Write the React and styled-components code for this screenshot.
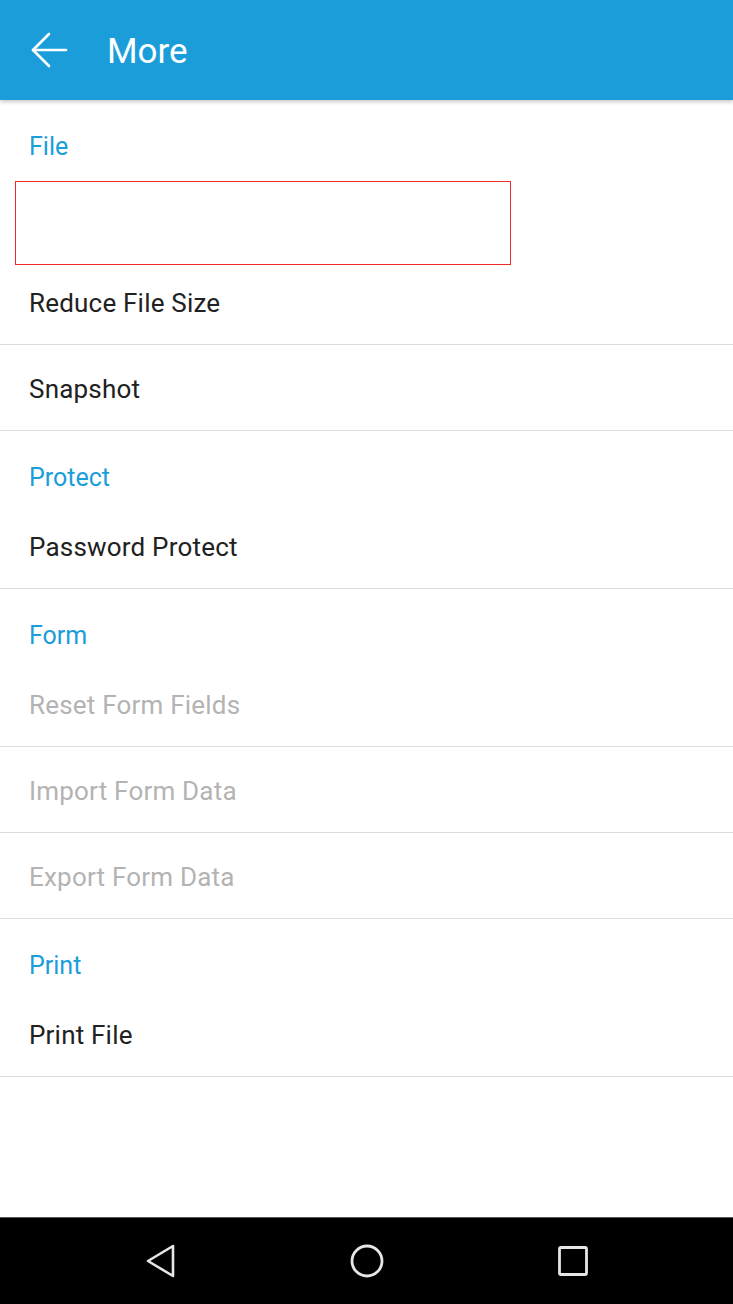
import React from 'react'
import styled, { createGlobalStyle } from 'styled-components'

const GlobalStyle = createGlobalStyle`
  html, body {
    margin: 0;
    padding: 0;
    background: #ffffff;
    font-family: Roboto, "Noto Sans", "Liberation Sans", sans-serif;
  }
`;

const Screen = styled.div`
  width: 733px;
  height: 1304px;
  display: flex;
  flex-direction: column;
  background: #ffffff;
  overflow: hidden;
`;

const AppBar = styled.header`
  height: 100px;
  flex: none;
  display: flex;
  align-items: center;
  background: #1a9dd9;
  box-shadow: 0 2px 4px rgba(0, 0, 0, 0.22);
  position: relative;
  z-index: 1;
`;

const BackButton = styled.button`
  width: 98px;
  height: 100px;
  padding: 0 0 0 30px;
  border: 0;
  background: none;
  display: flex;
  align-items: center;
  cursor: pointer;
`;

const Title = styled.h1`
  margin: 2px 0 0 9px;
  font-size: 35px;
  font-weight: 400;
  color: #ffffff;
`;

const Menu = styled.main`
  flex: 1;
  display: flex;
  flex-direction: column;
`;

const SectionLabel = styled.div`
  height: 72px;
  box-sizing: border-box;
  padding: 31px 29px 0;
  font-size: 25px;
  line-height: 32px;
  color: #1a9dd9;
`;

const Item = styled.div`
  height: 86px;
  box-sizing: border-box;
  padding: 2px 29px 0;
  display: flex;
  align-items: center;
  font-size: 26px;
  letter-spacing: 0.2px;
  color: ${props => (props.disabled ? '#b3b3b3' : '#212121')};
  border-bottom: ${props => (props.divider ? '1px solid #dcdcdc' : 'none')};
`;

const Slot = styled.div`
  height: 87px;
  padding: 9px 0 0 15px;
  box-sizing: border-box;
`;

const Highlight = styled.div`
  width: 496px;
  height: 84px;
  box-sizing: border-box;
  border: 1px solid #ee2a2a;
`;

const NavBar = styled.nav`
  height: 86px;
  flex: none;
  background: #000000;
  border-top: 1px solid #5a5a5a;
  display: flex;
  align-items: center;
  justify-content: center;
  gap: 146px;
`;

const NavKey = styled.div`
  width: 60px;
  height: 60px;
  display: flex;
  align-items: center;
  justify-content: center;
`;

const sections = [
  { label: 'Print', items: [{ text: 'Print File' }] },
];

export default function App() {
  return (
    <Screen>
      <GlobalStyle />
      <AppBar>
        <BackButton aria-label="Back">
          <svg width="38" height="38" viewBox="0 0 38 38" fill="none" stroke="#ffffff" strokeWidth="2.6" strokeLinecap="round" strokeLinejoin="round">
            <path d="M36 19H3" />
            <path d="M19 3L3 19l16 16" />
          </svg>
        </BackButton>
        <Title>More</Title>
      </AppBar>

      <Menu>
        <SectionLabel>File</SectionLabel>
        <Slot>
          <Highlight />
        </Slot>
        <Item divider>Reduce File Size</Item>
        <Item divider>Snapshot</Item>

        <SectionLabel>Protect</SectionLabel>
        <Item divider>Password Protect</Item>

        <SectionLabel>Form</SectionLabel>
        <Item divider disabled>Reset Form Fields</Item>
        <Item divider disabled>Import Form Data</Item>
        <Item divider disabled>Export Form Data</Item>

        {sections.map(section => (
          <React.Fragment key={section.label}>
            <SectionLabel>{section.label}</SectionLabel>
            {section.items.map(item => (
              <Item key={item.text} divider>{item.text}</Item>
            ))}
          </React.Fragment>
        ))}
      </Menu>

      <NavBar>
        <NavKey>
          <svg width="30" height="34" viewBox="0 0 30 34" fill="none" stroke="#e6e6e6" strokeWidth="2.6" strokeLinejoin="round">
            <path d="M27 2v30L2 17z" />
          </svg>
        </NavKey>
        <NavKey>
          <svg width="34" height="34" viewBox="0 0 34 34" fill="none" stroke="#e6e6e6" strokeWidth="2.8">
            <circle cx="17" cy="17" r="15" />
          </svg>
        </NavKey>
        <NavKey>
          <svg width="30" height="30" viewBox="0 0 30 30" fill="none" stroke="#e6e6e6" strokeWidth="2.8" strokeLinejoin="round">
            <rect x="1.5" y="1.5" width="27" height="27" rx="1.5" />
          </svg>
        </NavKey>
      </NavBar>
    </Screen>
  )
}
